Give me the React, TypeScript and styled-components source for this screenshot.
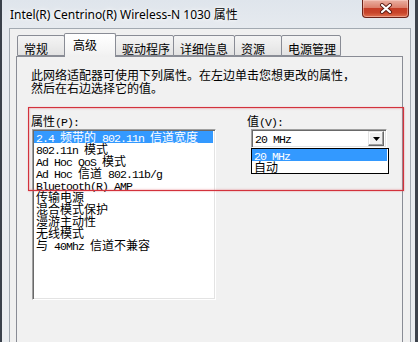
import React from 'react';
import styled, { createGlobalStyle } from 'styled-components';

const Global = createGlobalStyle`
  html, body { margin: 0; padding: 0; background: #fff; }
  body { width: 418px; height: 342px; overflow: hidden; }
`;

const CJK = '"Noto Sans CJK SC", "Noto Sans", sans-serif';

const Window = styled.div`
  position: relative;
  width: 418px;
  height: 342px;
  box-sizing: border-box;
  display: flex;
  flex-direction: column;
  overflow: hidden;
  background: linear-gradient(180deg, #dfe5ec 0px, #e6eaef 28px, #eaedf0 100%);
  border-left: 2px solid #39404a;
  border-right: 3px solid #3d434c;
`;

const TitleBar = styled.div`
  flex: none;
  height: 28px;
  display: flex;
  justify-content: space-between;
  align-items: flex-start;
  padding: 0 6px 0 8px;
`;

const Title = styled.div`
  font-family: "Noto Sans", sans-serif;
  font-size: 12px;
  line-height: 27px;
  color: #000;
  text-shadow: 0 0 6px #fff, 0 0 3px #fff;
  white-space: nowrap;
  span { font-family: ${CJK}; }
`;

const CloseButton = styled.div`
  width: 47px;
  height: 18px;
  box-sizing: border-box;
  border: 1px solid #6b2218;
  border-top: none;
  border-radius: 0 0 4px 4px;
  background: linear-gradient(180deg, #eab0a2 0%, #dc7f6b 45%, #c53d26 50%, #c8452b 75%, #e0704f 100%);
  box-shadow: inset 0 0 0 1px rgba(255, 220, 210, 0.45);
  display: flex;
  align-items: center;
  justify-content: center;
`;

const ClientWrap = styled.div`
  flex: 1;
  display: flex;
  padding: 0 6px 0 7px;
  min-height: 0;
`;

const Client = styled.div`
  flex: 1;
  display: flex;
  flex-direction: column;
  background: #f0f0f0;
  border: 1px solid #a2a9b1;
  border-bottom: none;
  padding: 4px 7px 0 6px;
`;

const TabRow = styled.div`
  display: flex;
  align-items: flex-end;
  height: 23px;
  padding-left: 1px;
`;

const Tab = styled.div<{ $w: number; $active?: boolean }>`
  position: relative;
  z-index: ${(p) => (p.$active ? 2 : 1)};
  box-sizing: border-box;
  width: ${(p) => p.$w}px;
  margin-left: -1px;
  &:first-child { margin-left: 0; }
  height: ${(p) => (p.$active ? 24 : 21)}px;
  margin-bottom: ${(p) => (p.$active ? -1 : 0)}px;
  padding: ${(p) => (p.$active ? '0 0 0 8px' : '2px 0 0 6px')};
  border: 1px solid #898c95;
  border-bottom: ${(p) => (p.$active ? 'none' : '1px solid #898c95')};
  border-radius: 2px 2px 0 0;
  background: ${(p) =>
    p.$active
      ? 'linear-gradient(180deg, #ffffff 0%, #f7f7f7 60%, #f0f0f0 100%)'
      : 'linear-gradient(180deg, #f4f4f4 0%, #ececec 50%, #e2e2e2 100%)'};
  font-family: ${CJK};
  font-size: 12px;
  line-height: 21px;
  color: #000;
  white-space: nowrap;
`;

const Panel = styled.div`
  position: relative;
  z-index: 1;
  flex: 1;
  background: #f1f1f1;
  border: 1px solid #898c95;
  border-bottom: none;
  padding: 11px 14px 0 14px;
`;

const Desc = styled.div`
  font-family: ${CJK};
  font-size: 12px;
  line-height: 13px;
  color: #000;
  white-space: nowrap;
`;

const Columns = styled.div`
  display: grid;
  grid-template-columns: 185px 141px;
  column-gap: 31px;
  margin-top: 20px;
`;

const Column = styled.div`
  display: flex;
  flex-direction: column;
  position: relative;
`;

const Label = styled.div`
  font-family: ${CJK};
  font-size: 12px;
  line-height: 13px;
  height: 13px;
  color: #000;
  white-space: pre;
  margin-bottom: 2px;
`;

const ListBox = styled.div`
  box-sizing: border-box;
  margin-left: 1px;
  width: 184px;
  height: 171px;
  background: #fff;
  border: 1px solid;
  border-color: #a0a0a0 #ffffff #ffffff #a0a0a0;
  box-shadow: inset 1px 1px 0 #696969, inset -1px -1px 0 #e3e3e3;
  padding: 1px 2px 1px 1px;
  display: flex;
  flex-direction: column;
`;

const Item = styled.div<{ $sel?: boolean }>`
  flex: none;
  height: 12px;
  line-height: 12px;
  padding-left: 2px;
  white-space: pre;
  font-family: ${CJK};
  font-size: 12px;
  color: ${(p) => (p.$sel ? '#fff' : '#000')};
  background: ${(p) => (p.$sel ? '#3399ff' : 'transparent')};
`;

const Half = styled.span`
  font-family: "Liberation Mono", monospace;
  font-size: 11.5px;
  letter-spacing: -0.9px;
`;

const Combo = styled.div`
  position: relative;
  box-sizing: border-box;
  margin-left: 4px;
  width: 136px;
  height: 19px;
  background: #fff;
  border: 1px solid;
  border-color: #a0a0a0 #ffffff #ffffff #a0a0a0;
  box-shadow: inset 1px 1px 0 #696969, inset -1px -1px 0 #e3e3e3;
  display: flex;
  align-items: center;
  padding: 0 2px 0 2px;
`;

const ComboText = styled.div`
  flex: 1;
  padding-left: 1px;
  line-height: 12px;
  white-space: pre;
`;

const DropButton = styled.div`
  width: 16px;
  height: 15px;
  box-sizing: border-box;
  background: #f0f0f0;
  border: 1px solid;
  border-color: #e3e3e3 #696969 #696969 #e3e3e3;
  box-shadow: inset -1px -1px 0 #a0a0a0, inset 1px 1px 0 #fff;
  display: flex;
  align-items: center;
  justify-content: center;
`;

const Popup = styled.div`
  position: absolute;
  left: 4px;
  top: 34px;
  box-sizing: border-box;
  width: 138px;
  background: #fff;
  border: 1px solid #000;
  padding: 0 1px 0 0;
  display: flex;
  flex-direction: column;
  z-index: 3;
`;

const RedMark = styled.div`
  position: absolute;
  left: 26px;
  top: 107px;
  width: 376px;
  height: 84px;
  box-sizing: border-box;
  border: 1px solid #d3323c;
  box-shadow: 0 0 1.5px 0.5px rgba(225, 90, 100, 0.6), inset 0 0 1.5px 0.5px rgba(225, 90, 100, 0.5);
  pointer-events: none;
  z-index: 10;
`;

function SimText({ text }: { text: string }) {
  const runs = text.match(/[\x00-\xff]+|[^\x00-\xff]+/g) ?? [];
  return (
    <>
      {runs.map((r, i) =>
        /^[\x00-\xff]/.test(r) ? <Half key={i}>{r}</Half> : <span key={i}>{r}</span>
      )}
    </>
  );
}

const tabs = [
  { label: '常规', w: 48 },
  { label: '高级', w: 52, active: true },
  { label: '驱动程序', w: 59 },
  { label: '详细信息', w: 62 },
  { label: '资源', w: 48 },
  { label: '电源管理', w: 60 },
];

const props = [
  '2.4 频带的 802.11n 信道宽度',
  '802.11n 模式',
  'Ad Hoc QoS 模式',
  'Ad Hoc 信道 802.11b/g',
  'Bluetooth(R) AMP',
  '传输电源',
  '混合模式保护',
  '漫游主动性',
  '无线模式',
  '与 40Mhz 信道不兼容',
];

export default function App() {
  return (
    <>
      <Global />
      <Window>
        <TitleBar>
          <Title>
            Intel(R) Centrino(R) Wireless-N 1030 <span>属性</span>
          </Title>
          <CloseButton>
            <svg width="14" height="11" viewBox="0 0 14 11">
              <path d="M3 2 L11 9 M11 2 L3 9" stroke="#5a1a12" strokeWidth="4" strokeLinecap="round" />
              <path d="M3 2 L11 9 M11 2 L3 9" stroke="#ffffff" strokeWidth="2.2" strokeLinecap="round" />
            </svg>
          </CloseButton>
        </TitleBar>
        <ClientWrap>
          <Client>
            <TabRow>
              {tabs.map((t) => (
                <Tab key={t.label} $w={t.w} $active={t.active}>
                  {t.label}
                </Tab>
              ))}
            </TabRow>
            <Panel>
              <Desc>此网络适配器可使用下列属性。在左边单击您想更改的属性，</Desc>
              <Desc>然后在右边选择它的值。</Desc>
              <Columns>
                <Column>
                  <Label>
                    <SimText text="属性(P):" />
                  </Label>
                  <ListBox>
                    {props.map((p, i) => (
                      <Item key={p} $sel={i === 0}>
                        <SimText text={p} />
                      </Item>
                    ))}
                  </ListBox>
                </Column>
                <Column>
                  <Label>
                    <SimText text="值(V):" />
                  </Label>
                  <Combo>
                    <ComboText>
                      <Half>20 MHz</Half>
                    </ComboText>
                    <DropButton>
                      <svg width="7" height="4" viewBox="0 0 7 4">
                        <path d="M0 0 H7 L3.5 4 Z" fill="#000" />
                      </svg>
                    </DropButton>
                  </Combo>
                  <Popup>
                    <Item $sel>
                      <Half>20 MHz</Half>
                    </Item>
                    <Item>自动</Item>
                  </Popup>
                </Column>
              </Columns>
            </Panel>
          </Client>
        </ClientWrap>
        <RedMark />
      </Window>
    </>
  );
}
